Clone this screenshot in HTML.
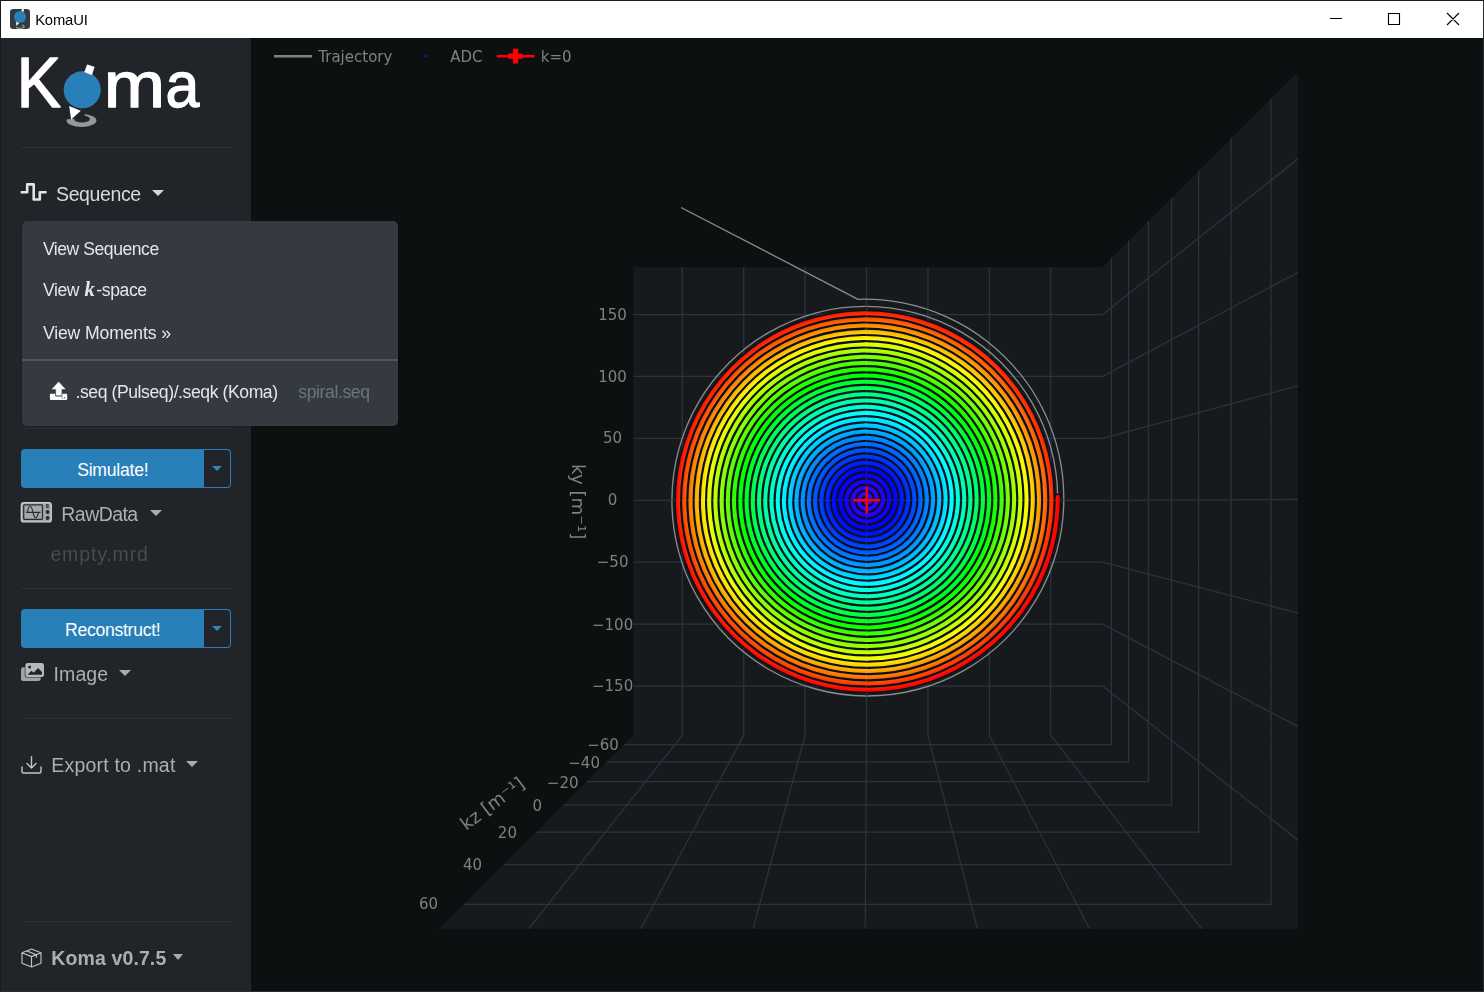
<!DOCTYPE html>
<html lang="en">
<head>
<meta charset="utf-8">
<title>KomaUI</title>
<style>
html,body{margin:0;padding:0;}
body{width:1484px;height:992px;overflow:hidden;background:#0d1011;position:relative;font-family:"Liberation Sans",sans-serif;color:#d0d3d6;}
#win{position:absolute;left:0;top:0;width:1484px;height:992px;overflow:hidden;background:#0d1011;}
#titlebar{position:absolute;left:1px;top:1px;width:1482px;height:37px;background:#fff;}
#sidebar{position:absolute;left:1px;top:38px;width:249.5px;height:953px;background:#212529;}
#plot{position:absolute;left:0;top:0;will-change:transform;}
.t{position:absolute;white-space:nowrap;line-height:1;margin:0;padding:0;}
.hr{position:absolute;left:21px;width:210px;height:1px;background:#2d3135;}
.btn{position:absolute;left:21px;width:210px;height:38.5px;}
.btn .main{position:absolute;left:0;top:0;width:183px;height:100%;background:#2980b9;border-radius:4px 0 0 4px;}
.btn .split{position:absolute;left:183px;top:0;width:27px;height:100%;box-sizing:border-box;border:1.3px solid #2980b9;border-left:none;border-radius:0 4px 4px 0;background:#212529;}
.caret{position:absolute;width:0;height:0;border-left:6px solid transparent;border-right:6px solid transparent;border-top:6px solid #a9acae;}
#menu{position:absolute;left:22px;top:221.2px;width:376px;height:205px;background:#343a40;border-radius:5px;box-shadow:0 0 0 1px rgba(0,0,0,.12);}
#menu .div{position:absolute;left:0;top:137.800px;width:100%;height:1.6px;background:#50565c;}
#frame{position:absolute;left:0;top:0;width:1482px;height:990px;border:1px solid #1b1b1b;border-right-color:#2a2d2f;border-bottom-color:#2a2d2f;pointer-events:none;}
svg{display:block;overflow:visible;}
.ico{position:absolute;}
</style>
</head>
<body>
<div id="win">
<svg id="plot" width="1484" height="992" viewBox="0 0 1484 992">
<defs><clipPath id="sc"><rect x="438.2" y="74" width="859.8" height="854.8"/></clipPath>
<radialGradient id="hs" gradientUnits="userSpaceOnUse" cx="866.3" cy="499.9" r="193.9">
<stop offset="0%" stop-color="#4000ff"/>
<stop offset="1.6%" stop-color="#3e00ff"/>
<stop offset="3.1%" stop-color="#3a00ff"/>
<stop offset="4.7%" stop-color="#3500ff"/>
<stop offset="6.2%" stop-color="#2e00ff"/>
<stop offset="7.8%" stop-color="#2800ff"/>
<stop offset="9.4%" stop-color="#2000ff"/>
<stop offset="10.9%" stop-color="#1800ff"/>
<stop offset="12.5%" stop-color="#0f00ff"/>
<stop offset="14.1%" stop-color="#0500ff"/>
<stop offset="15.6%" stop-color="#0005ff"/>
<stop offset="17.2%" stop-color="#000fff"/>
<stop offset="18.8%" stop-color="#001aff"/>
<stop offset="20.3%" stop-color="#0025ff"/>
<stop offset="21.9%" stop-color="#0031ff"/>
<stop offset="23.4%" stop-color="#003eff"/>
<stop offset="25%" stop-color="#004aff"/>
<stop offset="26.6%" stop-color="#0058ff"/>
<stop offset="28.1%" stop-color="#0065ff"/>
<stop offset="29.7%" stop-color="#0073ff"/>
<stop offset="31.2%" stop-color="#0081ff"/>
<stop offset="32.8%" stop-color="#0090ff"/>
<stop offset="34.4%" stop-color="#009fff"/>
<stop offset="35.9%" stop-color="#00aeff"/>
<stop offset="37.5%" stop-color="#00beff"/>
<stop offset="39.1%" stop-color="#00ceff"/>
<stop offset="40.6%" stop-color="#00deff"/>
<stop offset="42.2%" stop-color="#00efff"/>
<stop offset="43.8%" stop-color="#00fffe"/>
<stop offset="45.3%" stop-color="#00ffed"/>
<stop offset="46.9%" stop-color="#00ffdb"/>
<stop offset="48.4%" stop-color="#00ffc9"/>
<stop offset="50%" stop-color="#00ffb7"/>
<stop offset="51.6%" stop-color="#00ffa5"/>
<stop offset="53.1%" stop-color="#00ff92"/>
<stop offset="54.7%" stop-color="#00ff7f"/>
<stop offset="56.2%" stop-color="#00ff6c"/>
<stop offset="57.8%" stop-color="#00ff58"/>
<stop offset="59.4%" stop-color="#00ff44"/>
<stop offset="60.9%" stop-color="#00ff30"/>
<stop offset="62.5%" stop-color="#00ff1c"/>
<stop offset="64.1%" stop-color="#00ff07"/>
<stop offset="65.6%" stop-color="#0eff00"/>
<stop offset="67.2%" stop-color="#23ff00"/>
<stop offset="68.8%" stop-color="#38ff00"/>
<stop offset="70.3%" stop-color="#4eff00"/>
<stop offset="71.9%" stop-color="#64ff00"/>
<stop offset="73.4%" stop-color="#7aff00"/>
<stop offset="75%" stop-color="#90ff00"/>
<stop offset="76.6%" stop-color="#a7ff00"/>
<stop offset="78.1%" stop-color="#bdff00"/>
<stop offset="79.7%" stop-color="#d4ff00"/>
<stop offset="81.2%" stop-color="#ecff00"/>
<stop offset="82.8%" stop-color="#fffb00"/>
<stop offset="84.4%" stop-color="#ffe300"/>
<stop offset="85.9%" stop-color="#ffcb00"/>
<stop offset="87.5%" stop-color="#ffb300"/>
<stop offset="89.1%" stop-color="#ff9b00"/>
<stop offset="90.6%" stop-color="#ff8200"/>
<stop offset="92.2%" stop-color="#ff6a00"/>
<stop offset="93.8%" stop-color="#ff5100"/>
<stop offset="95.3%" stop-color="#ff3700"/>
<stop offset="96.9%" stop-color="#ff1e00"/>
<stop offset="98.4%" stop-color="#ff0400"/>
<stop offset="100%" stop-color="#ff0000"/>
</radialGradient></defs>
<g clip-path="url(#sc)">
<polygon fill="#161a1d" points="633.3,267.2 1102.6,267.2 1384,-13.7 1384,1016.2 351.5,1016.2 633.3,735.3"/>
<path d="M682.3 267.2V735.3M682.3 735.3L459.3 1016.2M743.7 267.2V735.3M743.7 735.3L594.4 1016.2M805.1 267.2V735.3M805.1 735.3L729.5 1016.2M866.5 267.2V735.3M866.5 735.3L864.6 1016.2M927.9 267.2V735.3M927.9 735.3L999.7 1016.2M989.3 267.2V735.3M989.3 735.3L1134.7 1016.2M1050.7 267.2V735.3M1050.7 735.3L1269.8 1016.2M633.3 314.5H1102.6M1102.6 314.5L1384 90.4M633.3 376.4H1102.6M1102.6 376.4L1384 226.6M633.3 438.4H1102.6M1102.6 438.4L1384 362.9M633.3 500.3H1102.6M1102.6 500.3L1384 499.1M633.3 562.2H1102.6M1102.6 562.2L1384 635.4M633.3 624.1H1102.6M1102.6 624.1L1384 771.6M633.3 686.1H1102.6M1102.6 686.1L1384 907.9M623.9 744.7L1111.4 744.7L1111.4 257.9M606.7 761.9L1128.6 761.9L1128.6 240.7M586.8 781.7L1148.4 781.7L1148.4 220.9M563.7 804.8L1171.5 804.8L1171.5 197.8M536.4 832L1198.7 832L1198.7 170.6M503.8 864.6L1231.2 864.6L1231.2 138.1M464 904.3L1270.9 904.3L1270.9 98.4" fill="none" stroke="#283442" stroke-width="1.25"/>
</g>
<g fill="none">
<path d="M1057.7 496.9Q1057.5 471.9 1050.9 447.9Q1044.3 423.7 1031.7 402.1Q1019.1 380.5 1001.3 362.7Q983.6 345 961.8 332.4Q940.1 319.8 915.8 313.2Q891.5 306.6 866.3 306.4Q840.8 306.3 816.2 312.8Q791.5 319.4 769.4 332.1Q747.3 344.8 729.2 362.8Q711 380.8 698.2 402.8Q685.4 424.9 678.7 449.6Q672 474.3 671.9 499.9Q671.8 525.5 678.3 550.3Q684.7 575.1 697.5 597.4Q710.2 619.7 728.2 638Q746.3 656.2 768.5 669.2Q790.8 682.2 815.6 689Q840.5 695.9 866.3 696Q892.1 696.1 917.1 689.5Q942.1 683 964.6 670.1Q987.1 657.3 1005.5 639.1Q1023.9 620.8 1036.9 598.4Q1050 576 1056.8 551Q1063.7 525.9 1063.8 499.9Q1064 477 1059 454.7Q1054.1 432.4 1044.1 411.7Q1034.1 391 1019.6 373.2Q1005.1 355.3 986.9 341.2Q968.7 327 947.7 317.4Q926.7 307.7 904 303.2Q881.3 298.6 858.1 299.3L681 207.5" stroke="#8c8c8c" stroke-width="1.3" stroke-linejoin="round"/>
<path d="M866.3 499.9Q866.2 499.7 866.1 499.6Q865.9 499.5 865.7 499.5Q865.5 499.5 865.3 499.6Q865.1 499.8 865 500Q864.9 500.2 864.8 500.5Q864.7 500.8 864.8 501.1Q864.9 501.5 865.1 501.8Q865.3 502.1 865.6 502.4Q866 502.6 866.4 502.8Q866.9 502.9 867.4 502.9Q868 502.8 868.5 502.6Q869 502.4 869.5 502Q869.9 501.5 870.3 501Q870.6 500.4 870.7 499.7Q870.8 499 870.7 498.2Q870.6 497.4 870.2 496.7Q869.8 496 869.2 495.4Q868.6 494.8 867.8 494.4Q866.9 494 866 493.9Q865 493.8 864.1 494Q863.1 494.2 862.2 494.8Q861.2 495.3 860.5 496.1Q859.8 497 859.3 498Q858.9 499.1 858.8 500.3Q858.7 501.5 859 502.7Q859.3 503.9 859.9 505Q860.6 506.1 861.7 507Q862.7 507.9 864 508.4Q865.3 508.9 866.7 509Q868.2 509.1 869.6 508.7Q871.1 508.3 872.4 507.5Q873.7 506.6 874.7 505.4Q875.7 504.1 876.3 502.6Q876.9 501.1 876.9 499.4Q877 497.7 876.5 496Q876.1 494.3 875.1 492.8Q874.1 491.3 872.7 490.2Q871.2 489.1 869.4 488.4Q867.6 487.8 865.7 487.7Q863.8 487.6 861.9 488.2Q859.9 488.8 858.3 489.9Q856.6 491.1 855.3 492.7Q854 494.4 853.3 496.4Q852.6 498.4 852.6 500.6Q852.5 502.8 853.1 504.9Q853.8 507 855.1 508.9Q856.4 510.8 858.2 512.2Q860.1 513.6 862.3 514.4Q864.6 515.2 867 515.2Q869.5 515.2 871.8 514.5Q874.2 513.8 876.3 512.3Q878.4 510.9 879.9 508.8Q881.4 506.7 882.3 504.3Q883.1 501.8 883.2 499.1Q883.2 496.4 882.4 493.8Q881.6 491.2 880 489Q878.3 486.7 876.1 485Q873.8 483.3 871.1 482.4Q868.3 481.5 865.4 481.5Q862.5 481.5 859.7 482.4Q856.8 483.3 854.4 485Q851.9 486.8 850.1 489.3Q848.3 491.7 847.3 494.7Q846.3 497.7 846.3 500.8Q846.3 504 847.3 507.1Q848.3 510.1 850.2 512.8Q852.1 515.4 854.8 517.4Q857.5 519.3 860.7 520.4Q863.9 521.4 867.3 521.4Q870.7 521.4 874 520.4Q877.3 519.3 880.1 517.2Q883 515.1 885.1 512.3Q887.2 509.4 888.3 505.9Q889.4 502.5 889.4 498.8Q889.4 495.2 888.2 491.6Q887.1 488.1 884.8 485.1Q882.6 482 879.5 479.8Q876.4 477.6 872.8 476.4Q869.1 475.2 865.2 475.3Q861.2 475.3 857.5 476.5Q853.7 477.8 850.5 480.1Q847.3 482.5 844.9 485.8Q842.5 489.1 841.3 493Q840.1 496.9 840.1 501.1Q840.1 505.3 841.5 509.2Q842.8 513.2 845.3 516.7Q847.8 520.1 851.3 522.6Q854.9 525.1 859 526.4Q863.2 527.7 867.6 527.7Q872 527.6 876.2 526.2Q880.4 524.8 884 522.1Q887.6 519.4 890.3 515.7Q892.9 512 894.3 507.6Q895.7 503.2 895.6 498.6Q895.6 493.9 894.1 489.5Q892.6 485 889.7 481.2Q886.9 477.4 883 474.6Q879.1 471.8 874.5 470.4Q869.8 469 864.9 469Q860 469.1 855.3 470.7Q850.6 472.3 846.7 475.2Q842.6 478.2 839.7 482.3Q836.8 486.5 835.3 491.3Q833.8 496.2 833.9 501.3Q833.9 506.5 835.6 511.4Q837.3 516.3 840.4 520.5Q843.6 524.7 847.9 527.8Q852.2 530.8 857.3 532.4Q862.4 534 867.8 533.9Q873.2 533.8 878.3 532.1Q883.5 530.3 887.9 527Q892.3 523.7 895.5 519.2Q898.6 514.6 900.3 509.3Q901.9 504 901.8 498.3Q901.8 492.7 899.9 487.3Q898.1 481.9 894.6 477.4Q891.2 472.8 886.5 469.5Q881.7 466.1 876.2 464.4Q870.6 462.7 864.7 462.8Q858.8 462.9 853.2 464.8Q847.6 466.7 842.8 470.3Q838 473.9 834.6 478.9Q831.1 483.8 829.3 489.6Q827.5 495.5 827.6 501.6Q827.7 507.7 829.8 513.5Q831.8 519.4 835.5 524.4Q839.3 529.3 844.4 532.9Q849.6 536.5 855.6 538.4Q861.7 540.2 868 540.1Q874.4 540 880.5 537.9Q886.6 535.8 891.7 531.9Q896.9 528 900.6 522.7Q904.4 517.3 906.3 511Q908.2 504.7 908.1 498.1Q908 491.5 905.8 485.2Q903.6 478.9 899.5 473.5Q895.5 468.1 889.9 464.3Q884.4 460.4 877.9 458.4Q871.3 456.4 864.5 456.6Q857.6 456.7 851.1 459Q844.5 461.2 839 465.4Q833.4 469.6 829.4 475.4Q825.4 481.2 823.3 487.9Q821.3 494.7 821.4 501.8Q821.5 508.9 823.9 515.7Q826.2 522.5 830.6 528.2Q835 534 840.9 538.1Q846.9 542.3 853.9 544.4Q860.9 546.5 868.2 546.4Q875.6 546.2 882.6 543.8Q889.6 541.3 895.6 536.8Q901.5 532.3 905.8 526.2Q910.1 520 912.3 512.8Q914.5 505.5 914.3 497.9Q914.2 490.3 911.6 483.1Q909.1 475.8 904.5 469.7Q899.8 463.5 893.4 459.1Q887.1 454.7 879.6 452.4Q872.1 450.2 864.3 450.3Q856.4 450.5 848.9 453.1Q841.5 455.7 835.1 460.5Q828.8 465.3 824.2 471.9Q819.7 478.5 817.3 486.2Q815 493.9 815.2 502Q815.3 510.1 818 517.8Q820.7 525.5 825.7 532Q830.6 538.6 837.4 543.3Q844.2 548 852.1 550.4Q860.1 552.8 868.4 552.6Q876.8 552.4 884.7 549.6Q892.7 546.9 899.4 541.8Q906.1 536.6 911 529.7Q915.8 522.7 918.3 514.5Q920.7 506.3 920.5 497.7Q920.4 489.1 917.5 481Q914.6 472.8 909.4 465.9Q904.1 458.9 896.9 454Q889.7 449 881.3 446.4Q872.9 443.9 864.1 444.1Q855.2 444.3 846.8 447.2Q838.4 450.2 831.3 455.6Q824.2 461 819.1 468.4Q813.9 475.8 811.3 484.4Q808.7 493.1 808.9 502.2Q809.1 511.3 812.2 519.9Q815.2 528.5 820.7 535.8Q826.3 543.2 833.9 548.4Q841.5 553.7 850.4 556.3Q859.3 559 868.6 558.8Q878 558.6 886.8 555.5Q895.7 552.4 903.2 546.7Q910.7 541 916.1 533.2Q921.5 525.4 924.2 516.2Q927 507.1 926.8 497.5Q926.6 487.9 923.4 478.9Q920.2 469.7 914.3 462.1Q908.4 454.3 900.5 448.8Q892.4 443.3 883.1 440.5Q873.7 437.6 863.9 437.9Q854 438.1 844.7 441.4Q835.4 444.6 827.5 450.6Q819.6 456.7 813.9 464.9Q808.2 473.1 805.4 482.7Q802.5 492.3 802.7 502.4Q802.9 512.4 806.3 522Q809.6 531.6 815.8 539.6Q822 547.7 830.4 553.6Q838.8 559.4 848.6 562.3Q858.5 565.3 868.8 565Q879.1 564.8 888.9 561.4Q898.7 557.9 907 551.6Q915.3 545.3 921.2 536.7Q927.2 528.1 930.2 518Q933.2 507.9 933 497.4Q932.8 486.8 929.2 476.8Q925.7 466.7 919.3 458.3Q912.8 449.8 904 443.7Q895.2 437.6 884.9 434.5Q874.5 431.4 863.7 431.6Q852.9 431.9 842.7 435.5Q832.4 439.1 823.7 445.7Q815 452.3 808.8 461.3Q802.5 470.4 799.4 480.9Q796.2 491.5 796.5 502.5Q796.7 513.6 800.4 524.1Q804.1 534.6 810.9 543.4Q817.6 552.3 826.8 558.7Q836.1 565.1 846.9 568.3Q857.7 571.5 869 571.3Q880.3 571 891 567.3Q901.7 563.5 910.8 556.6Q919.9 549.7 926.4 540.2Q932.9 530.8 936.2 519.8Q939.5 508.7 939.2 497.2Q939 485.6 935.1 474.7Q931.3 463.7 924.2 454.5Q917.1 445.2 907.5 438.5Q897.9 431.9 886.6 428.5Q875.4 425.1 863.6 425.4Q851.8 425.7 840.6 429.6Q829.4 433.5 819.9 440.7Q810.4 448 803.7 457.8Q796.9 467.6 793.4 479.1Q790 490.6 790.2 502.7Q790.5 514.7 794.5 526.1Q798.5 537.6 805.9 547.2Q813.3 556.9 823.3 563.8Q833.3 570.8 845.1 574.3Q856.8 577.8 869.1 577.5Q881.4 577.2 893 573.1Q904.7 569 914.6 561.5Q924.4 554 931.5 543.8Q938.6 533.5 942.2 521.6Q945.8 509.6 945.5 497.1Q945.2 484.5 941 472.6Q936.8 460.7 929.2 450.7Q921.5 440.6 911.1 433.4Q900.6 426.2 888.4 422.5Q876.2 418.9 863.4 419.2Q850.6 419.5 838.5 423.7Q826.4 428 816.2 435.8Q805.9 443.6 798.5 454.2Q791.2 464.9 787.4 477.3Q783.7 489.8 784 502.8Q784.3 515.9 788.6 528.2Q793 540.6 800.9 551Q808.9 561.4 819.7 568.9Q830.6 576.5 843.3 580.2Q856 584.1 869.2 583.7Q882.5 583.4 895.1 579Q907.7 574.6 918.3 566.5Q929 558.4 936.6 547.3Q944.3 536.3 948.1 523.4Q952 510.5 951.7 496.9Q951.4 483.4 946.9 470.6Q942.4 457.8 934.1 446.9Q925.9 436.1 914.6 428.3Q903.4 420.5 890.2 416.6Q877.1 412.6 863.3 412.9Q849.5 413.3 836.5 417.8Q823.4 422.4 812.4 430.8Q801.3 439.2 793.4 450.7Q785.5 462.1 781.5 475.5Q777.5 488.9 777.8 502.9Q778.1 517 782.8 530.2Q787.4 543.5 796 554.7Q804.5 566 816.2 574.1Q827.8 582.1 841.5 586.2Q855.1 590.3 869.3 590Q883.6 589.7 897.1 584.9Q910.7 580.2 922.1 571.5Q933.5 562.8 941.7 550.9Q950 539 954.1 525.2Q958.3 511.3 957.9 496.8Q957.6 482.3 952.8 468.6Q948 454.8 939.1 443.2Q930.3 431.5 918.2 423.2Q906.1 414.8 892.1 410.6Q877.9 406.4 863.2 406.7Q848.4 407 834.5 411.9Q820.5 416.8 808.6 425.8Q796.8 434.8 788.3 447.1Q779.8 459.4 775.5 473.7Q771.2 488 771.5 503Q771.9 518.1 776.9 532.3Q781.8 546.5 791 558.5Q800.1 570.5 812.6 579.2Q825.1 587.8 839.6 592.2Q854.2 596.6 869.5 596.2Q884.7 595.9 899.2 590.8Q913.6 585.8 925.8 576.5Q938.1 567.2 946.8 554.5Q955.6 541.8 960.1 527Q964.5 512.2 964.2 496.7Q963.8 481.2 958.7 466.5Q953.6 451.8 944.1 439.4Q934.7 427 921.8 418.1Q908.9 409.2 893.9 404.6Q878.8 400.1 863.1 400.5Q847.3 400.8 832.4 406Q817.5 411.3 804.9 420.8Q792.3 430.4 783.2 443.5Q774.1 456.6 769.6 471.8Q765 487.1 765.3 503.1Q765.7 519.1 771 534.3Q776.3 549.4 786 562.2Q795.7 575.1 809 584.3Q822.3 593.5 837.8 598.1Q853.3 602.8 869.5 602.4Q885.8 602.1 901.2 596.7Q916.6 591.3 929.6 581.5Q942.6 571.6 951.9 558.1Q961.3 544.6 966 528.9Q970.8 513.1 970.4 496.6Q970 480.1 964.6 464.5Q959.1 448.9 949.1 435.7Q939.1 422.5 925.4 413Q911.7 403.5 895.7 398.7Q879.7 393.9 863 394.2Q846.3 394.6 830.4 400.1Q814.6 405.7 801.2 415.8Q787.7 426 778.1 439.9Q768.5 453.8 763.6 470Q758.7 486.2 759.1 503.2Q759.4 520.2 765 536.3Q770.7 552.4 781 566Q791.3 579.6 805.4 589.3Q819.5 599.1 835.9 604.1Q852.4 609 869.6 608.7Q886.9 608.3 903.2 602.6Q919.5 596.9 933.3 586.5Q947.1 576 957 561.7Q966.9 547.4 972 530.7Q977 514 976.6 496.6Q976.3 479.1 970.5 462.5Q964.7 446 954.1 432Q943.5 418 929 407.9Q914.5 397.8 897.6 392.7Q880.7 387.6 863 388Q845.2 388.4 828.4 394.2Q811.6 400.1 797.4 410.8Q783.2 421.6 773 436.3Q762.8 451 757.7 468.1Q752.5 485.3 752.8 503.3Q753.2 521.2 759.1 538.3Q765.1 555.3 776 569.7Q786.9 584.1 801.8 594.4Q816.7 604.8 834.1 610Q851.5 615.3 869.7 614.9Q887.9 614.5 905.2 608.5Q922.4 602.5 937 591.5Q951.6 580.4 962.1 565.3Q972.6 550.2 977.9 532.6Q983.3 515 982.9 496.5Q982.5 478 976.4 460.6Q970.3 443 959.1 428.3Q947.9 413.5 932.6 402.8Q917.3 392.2 899.5 386.8Q881.6 381.4 862.9 381.8Q844.2 382.1 826.5 388.3Q808.7 394.5 793.7 405.8Q778.7 417.2 768 432.7Q757.2 448.2 751.7 466.3Q746.2 484.4 746.6 503.3Q747 522.3 753.2 540.2Q759.5 558.2 771 573.4Q782.5 588.6 798.2 599.5Q813.9 610.4 832.2 616Q850.5 621.5 869.7 621.2Q888.9 620.8 907.1 614.5Q925.3 608.1 940.7 596.5Q956.1 584.8 967.2 568.9Q978.2 553 983.9 534.5Q989.5 515.9 989.1 496.5Q988.7 477 982.3 458.6Q975.9 440.1 964.1 424.6Q952.3 409 936.3 397.8Q920.2 386.6 901.4 380.9Q882.5 375.1 862.9 375.5Q843.1 375.9 824.5 382.4Q805.8 388.9 790 400.8Q774.2 412.8 762.9 429Q751.5 445.3 745.8 464.4Q740 483.4 740.4 503.3Q740.8 523.3 747.3 542.2Q753.9 561.1 765.9 577.1Q778.1 593.1 794.5 604.6Q811 616.1 830.3 621.9Q849.6 627.8 869.8 627.4Q890 627 909.1 620.4Q928.2 613.7 944.4 601.5Q960.6 589.3 972.2 572.6Q983.9 555.9 989.8 536.4Q995.7 516.9 995.3 496.4Q995 476 988.3 456.6Q981.5 437.3 969.2 420.9Q956.8 404.5 939.9 392.7Q923 380.9 903.3 374.9Q883.5 368.9 862.8 369.3Q842.1 369.7 822.5 376.5Q802.9 383.2 786.4 395.8Q769.8 408.3 757.8 425.4Q745.9 442.5 739.8 462.5Q733.7 482.5 734.1 503.4Q734.5 524.3 741.4 544.1Q748.2 564 760.9 580.8Q773.6 597.6 790.9 609.6Q808.2 621.7 828.4 627.9Q848.6 634 869.8 633.6Q891 633.2 911 626.3Q931.1 619.4 948.1 606.5Q965.1 593.7 977.3 576.2Q989.5 558.7 995.7 538.3Q1002 517.8 1001.6 496.4Q1001.2 475 994.2 454.7Q987.2 434.4 974.2 417.2Q961.2 400 943.6 387.7Q925.9 375.3 905.2 369Q884.5 362.7 862.8 363.1Q841.1 363.5 820.6 370.5Q800.1 377.6 782.7 390.7Q765.3 403.9 752.8 421.7Q740.3 439.6 733.9 460.5Q727.5 481.5 727.9 503.4Q728.3 525.3 735.5 546.1Q742.6 566.9 755.9 584.4Q769.1 602 787.2 614.7Q805.3 627.3 826.5 633.8Q847.6 640.3 869.8 639.9Q892 639.5 913 632.2Q934 625 951.7 611.6Q969.5 598.2 982.3 579.9Q995.1 561.6 1001.7 540.2Q1008.2 518.8 1007.8 496.4Q1007.4 474 1000.1 452.8Q992.8 431.5 979.2 413.5Q965.7 395.5 947.2 382.6Q928.7 369.7 907.1 363Q885.5 356.4 862.8 356.8Q840.1 357.2 818.7 364.6Q797.2 372 779 385.7Q760.8 399.4 747.8 418.1Q734.7 436.8 728 458.6Q721.3 480.5 721.7 503.4Q722.1 526.3 729.5 548Q737 569.7 750.8 588.1Q764.7 606.5 783.5 619.7Q802.4 633 824.5 639.7Q846.6 646.5 869.8 646.1Q892.9 645.7 914.9 638.2Q936.8 630.6 955.4 616.6Q974 602.6 987.4 583.6Q1000.8 564.5 1007.6 542.2Q1014.4 519.8 1014.1 496.4Q1013.7 473 1006 450.8Q998.4 428.7 984.3 409.9Q970.2 391.1 950.9 377.6Q931.6 364 909.1 357.1Q886.5 350.2 862.8 350.6Q839.2 351 816.8 358.7Q794.3 366.4 775.4 380.6Q756.4 394.9 742.7 414.4Q729 433.9 722 456.7Q715 479.5 715.4 503.4Q715.8 527.3 723.6 549.9Q731.4 572.6 745.8 591.7Q760.2 610.9 779.9 624.7Q799.6 638.6 822.6 645.6Q845.6 652.7 869.7 652.3Q893.9 651.9 916.8 644.1Q939.7 636.2 959 621.7Q978.4 607.1 992.4 587.3Q1006.4 567.4 1013.5 544.1Q1020.7 520.8 1020.3 496.5Q1019.9 472.1 1012 448.9Q1004.1 425.8 989.4 406.2Q974.6 386.6 954.6 372.5Q934.5 358.4 911 351.2Q887.5 344 862.9 344.4Q838.2 344.7 814.9 352.7Q791.5 360.7 771.7 375.6Q751.9 390.4 737.7 410.7Q723.4 431 716.1 454.7Q708.8 478.5 709.2 503.3Q709.6 528.2 717.6 551.8Q725.7 575.4 740.7 595.4Q755.7 615.4 776.2 629.8Q796.7 644.2 820.6 651.6Q844.6 658.9 869.7 658.6Q894.9 658.2 918.7 650Q942.5 641.9 962.7 626.8Q982.9 611.6 997.4 591Q1012 570.3 1019.4 546.1Q1026.9 521.9 1026.5 496.5Q1026.1 471.1 1017.9 447.1Q1009.7 423 994.4 402.6Q979.1 382.2 958.3 367.5Q937.4 352.8 913 345.3Q888.5 337.7 862.9 338.1Q837.3 338.5 813 346.8Q788.7 355.1 768.1 370.5Q747.5 385.9 732.7 407Q717.8 428.1 710.2 452.7Q702.6 477.4 703 503.3Q703.3 529.2 711.7 553.7Q720.1 578.2 735.6 599Q751.2 619.8 772.5 634.8Q793.7 649.8 818.6 657.5Q843.6 665.2 869.7 664.8Q895.8 664.4 920.5 656Q945.3 647.5 966.3 631.8Q987.3 616.1 1002.4 594.7Q1017.6 573.2 1025.4 548.1Q1033.1 522.9 1032.8 496.6Q1032.4 470.2 1023.9 445.2Q1015.4 420.2 999.5 399Q983.6 377.8 962 362.5Q940.3 347.2 915 339.4Q889.6 331.5 863 331.9Q836.3 332.3 811.1 340.8Q785.9 349.4 764.5 365.4Q743.1 381.4 727.7 403.3Q712.2 425.2 704.3 450.7Q696.4 476.4 696.7 503.2Q697.1 530.1 705.7 555.5Q714.4 581 730.5 602.6Q746.7 624.2 768.7 639.8Q790.8 655.4 816.7 663.4Q842.5 671.4 869.6 671Q896.7 670.7 922.4 661.9Q948.1 653.2 969.9 636.9Q991.7 620.6 1007.4 598.4Q1023.2 576.1 1031.3 550Q1039.4 524 1039 496.6Q1038.6 469.3 1029.8 443.3Q1021 417.4 1004.6 395.4Q988.2 373.4 965.7 357.5Q943.2 341.6 916.9 333.5Q890.6 325.3 863 325.6Q835.4 326 809.3 334.9Q783.1 343.8 760.9 360.3Q738.7 376.9 722.7 399.6Q706.6 422.2 698.4 448.8Q690.1 475.3 690.5 503.1Q690.8 531 699.8 557.4Q708.8 583.8 725.5 606.2Q742.2 628.6 765 644.8Q787.9 661 814.6 669.3Q841.4 677.6 869.5 677.3Q897.6 676.9 924.3 667.9Q950.9 658.9 973.5 642Q996.1 625.2 1012.4 602.1Q1028.8 579 1037.2 552.1Q1045.6 525 1045.2 496.7Q1044.9 468.3 1035.8 441.5Q1026.7 414.6 1009.7 391.8Q992.7 369 969.4 352.5Q946.2 336 919 327.6Q891.7 319.1 863.1 319.4Q834.5 319.8 807.4 328.9Q780.3 338.1 757.3 355.2Q734.3 372.4 717.7 395.8Q701 419.3 692.5 446.7Q683.9 474.2 684.2 503Q684.6 531.9 693.8 559.2Q703.1 586.6 720.4 609.8Q737.6 633 761.3 649.8Q784.9 666.6 812.6 675.2Q840.4 683.8 869.4 683.5Q898.5 683.2 926.1 673.9Q953.7 664.5 977.1 647.1Q1000.5 629.7 1017.4 605.9Q1034.3 582 1043.1 554.1Q1051.8 526.1 1051.5 496.8Q1051.1 467.5 1041.7 439.6Q1032.3 411.8 1014.8 388.2Q997.2 364.6 973.2 347.5Q949.1 330.5 921 321.7Q892.8 312.8 863.2 313.2Q833.6 313.5 805.6 323Q777.5 332.4 753.7 350.1Q729.9 367.8 712.7 392.1Q695.5 416.3 686.6 444.7Q677.7 473.1 678 502.9Q678.3 532.8 687.9 561.1Q697.4 589.4 715.3 613.4Q733.1 637.4 757.5 654.8Q782 672.1 810.6 681.1Q839.3 690.1 869.3 689.7Q899.4 689.4 927.9 679.8Q956.5 670.2 980.7 652.2Q1004.9 634.2 1022.4 609.6Q1039.9 585 1049 556.1Q1058 527.2 1057.7 496.9" stroke="#07101c" stroke-width="6.6" stroke-linecap="round"/>
<circle cx="866.3" cy="499.9" r="3" fill="#07101c"/>
<path d="M866.5 300V700M665 500.4H1068" stroke="#283442" stroke-width="1.2" opacity=".8"/>
<path d="M866.3 499.9Q866.2 499.7 866.1 499.6Q865.9 499.5 865.7 499.5Q865.5 499.5 865.3 499.6Q865.1 499.8 865 500Q864.9 500.2 864.8 500.5Q864.7 500.8 864.8 501.1Q864.9 501.5 865.1 501.8Q865.3 502.1 865.6 502.4Q866 502.6 866.4 502.8Q866.9 502.9 867.4 502.9Q868 502.8 868.5 502.6Q869 502.4 869.5 502Q869.9 501.5 870.3 501Q870.6 500.4 870.7 499.7Q870.8 499 870.7 498.2Q870.6 497.4 870.2 496.7Q869.8 496 869.2 495.4Q868.6 494.8 867.8 494.4Q866.9 494 866 493.9Q865 493.8 864.1 494Q863.1 494.2 862.2 494.8Q861.2 495.3 860.5 496.1Q859.8 497 859.3 498Q858.9 499.1 858.8 500.3Q858.7 501.5 859 502.7Q859.3 503.9 859.9 505Q860.6 506.1 861.7 507Q862.7 507.9 864 508.4Q865.3 508.9 866.7 509Q868.2 509.1 869.6 508.7Q871.1 508.3 872.4 507.5Q873.7 506.6 874.7 505.4Q875.7 504.1 876.3 502.6Q876.9 501.1 876.9 499.4Q877 497.7 876.5 496Q876.1 494.3 875.1 492.8Q874.1 491.3 872.7 490.2Q871.2 489.1 869.4 488.4Q867.6 487.8 865.7 487.7Q863.8 487.6 861.9 488.2Q859.9 488.8 858.3 489.9Q856.6 491.1 855.3 492.7Q854 494.4 853.3 496.4Q852.6 498.4 852.6 500.6Q852.5 502.8 853.1 504.9Q853.8 507 855.1 508.9Q856.4 510.8 858.2 512.2Q860.1 513.6 862.3 514.4Q864.6 515.2 867 515.2Q869.5 515.2 871.8 514.5Q874.2 513.8 876.3 512.3Q878.4 510.9 879.9 508.8Q881.4 506.7 882.3 504.3Q883.1 501.8 883.2 499.1Q883.2 496.4 882.4 493.8Q881.6 491.2 880 489Q878.3 486.7 876.1 485Q873.8 483.3 871.1 482.4Q868.3 481.5 865.4 481.5Q862.5 481.5 859.7 482.4Q856.8 483.3 854.4 485Q851.9 486.8 850.1 489.3Q848.3 491.7 847.3 494.7Q846.3 497.7 846.3 500.8Q846.3 504 847.3 507.1Q848.3 510.1 850.2 512.8Q852.1 515.4 854.8 517.4Q857.5 519.3 860.7 520.4Q863.9 521.4 867.3 521.4Q870.7 521.4 874 520.4Q877.3 519.3 880.1 517.2Q883 515.1 885.1 512.3Q887.2 509.4 888.3 505.9Q889.4 502.5 889.4 498.8Q889.4 495.2 888.2 491.6Q887.1 488.1 884.8 485.1Q882.6 482 879.5 479.8Q876.4 477.6 872.8 476.4Q869.1 475.2 865.2 475.3Q861.2 475.3 857.5 476.5Q853.7 477.8 850.5 480.1Q847.3 482.5 844.9 485.8Q842.5 489.1 841.3 493Q840.1 496.9 840.1 501.1Q840.1 505.3 841.5 509.2Q842.8 513.2 845.3 516.7Q847.8 520.1 851.3 522.6Q854.9 525.1 859 526.4Q863.2 527.7 867.6 527.7Q872 527.6 876.2 526.2Q880.4 524.8 884 522.1Q887.6 519.4 890.3 515.7Q892.9 512 894.3 507.6Q895.7 503.2 895.6 498.6Q895.6 493.9 894.1 489.5Q892.6 485 889.7 481.2Q886.9 477.4 883 474.6Q879.1 471.8 874.5 470.4Q869.8 469 864.9 469Q860 469.1 855.3 470.7Q850.6 472.3 846.7 475.2Q842.6 478.2 839.7 482.3Q836.8 486.5 835.3 491.3Q833.8 496.2 833.9 501.3Q833.9 506.5 835.6 511.4Q837.3 516.3 840.4 520.5Q843.6 524.7 847.9 527.8Q852.2 530.8 857.3 532.4Q862.4 534 867.8 533.9Q873.2 533.8 878.3 532.1Q883.5 530.3 887.9 527Q892.3 523.7 895.5 519.2Q898.6 514.6 900.3 509.3Q901.9 504 901.8 498.3Q901.8 492.7 899.9 487.3Q898.1 481.9 894.6 477.4Q891.2 472.8 886.5 469.5Q881.7 466.1 876.2 464.4Q870.6 462.7 864.7 462.8Q858.8 462.9 853.2 464.8Q847.6 466.7 842.8 470.3Q838 473.9 834.6 478.9Q831.1 483.8 829.3 489.6Q827.5 495.5 827.6 501.6Q827.7 507.7 829.8 513.5Q831.8 519.4 835.5 524.4Q839.3 529.3 844.4 532.9Q849.6 536.5 855.6 538.4Q861.7 540.2 868 540.1Q874.4 540 880.5 537.9Q886.6 535.8 891.7 531.9Q896.9 528 900.6 522.7Q904.4 517.3 906.3 511Q908.2 504.7 908.1 498.1Q908 491.5 905.8 485.2Q903.6 478.9 899.5 473.5Q895.5 468.1 889.9 464.3Q884.4 460.4 877.9 458.4Q871.3 456.4 864.5 456.6Q857.6 456.7 851.1 459Q844.5 461.2 839 465.4Q833.4 469.6 829.4 475.4Q825.4 481.2 823.3 487.9Q821.3 494.7 821.4 501.8Q821.5 508.9 823.9 515.7Q826.2 522.5 830.6 528.2Q835 534 840.9 538.1Q846.9 542.3 853.9 544.4Q860.9 546.5 868.2 546.4Q875.6 546.2 882.6 543.8Q889.6 541.3 895.6 536.8Q901.5 532.3 905.8 526.2Q910.1 520 912.3 512.8Q914.5 505.5 914.3 497.9Q914.2 490.3 911.6 483.1Q909.1 475.8 904.5 469.7Q899.8 463.5 893.4 459.1Q887.1 454.7 879.6 452.4Q872.1 450.2 864.3 450.3Q856.4 450.5 848.9 453.1Q841.5 455.7 835.1 460.5Q828.8 465.3 824.2 471.9Q819.7 478.5 817.3 486.2Q815 493.9 815.2 502Q815.3 510.1 818 517.8Q820.7 525.5 825.7 532Q830.6 538.6 837.4 543.3Q844.2 548 852.1 550.4Q860.1 552.8 868.4 552.6Q876.8 552.4 884.7 549.6Q892.7 546.9 899.4 541.8Q906.1 536.6 911 529.7Q915.8 522.7 918.3 514.5Q920.7 506.3 920.5 497.7Q920.4 489.1 917.5 481Q914.6 472.8 909.4 465.9Q904.1 458.9 896.9 454Q889.7 449 881.3 446.4Q872.9 443.9 864.1 444.1Q855.2 444.3 846.8 447.2Q838.4 450.2 831.3 455.6Q824.2 461 819.1 468.4Q813.9 475.8 811.3 484.4Q808.7 493.1 808.9 502.2Q809.1 511.3 812.2 519.9Q815.2 528.5 820.7 535.8Q826.3 543.2 833.9 548.4Q841.5 553.7 850.4 556.3Q859.3 559 868.6 558.8Q878 558.6 886.8 555.5Q895.7 552.4 903.2 546.7Q910.7 541 916.1 533.2Q921.5 525.4 924.2 516.2Q927 507.1 926.8 497.5Q926.6 487.9 923.4 478.9Q920.2 469.7 914.3 462.1Q908.4 454.3 900.5 448.8Q892.4 443.3 883.1 440.5Q873.7 437.6 863.9 437.9Q854 438.1 844.7 441.4Q835.4 444.6 827.5 450.6Q819.6 456.7 813.9 464.9Q808.2 473.1 805.4 482.7Q802.5 492.3 802.7 502.4Q802.9 512.4 806.3 522Q809.6 531.6 815.8 539.6Q822 547.7 830.4 553.6Q838.8 559.4 848.6 562.3Q858.5 565.3 868.8 565Q879.1 564.8 888.9 561.4Q898.7 557.9 907 551.6Q915.3 545.3 921.2 536.7Q927.2 528.1 930.2 518Q933.2 507.9 933 497.4Q932.8 486.8 929.2 476.8Q925.7 466.7 919.3 458.3Q912.8 449.8 904 443.7Q895.2 437.6 884.9 434.5Q874.5 431.4 863.7 431.6Q852.9 431.9 842.7 435.5Q832.4 439.1 823.7 445.7Q815 452.3 808.8 461.3Q802.5 470.4 799.4 480.9Q796.2 491.5 796.5 502.5Q796.7 513.6 800.4 524.1Q804.1 534.6 810.9 543.4Q817.6 552.3 826.8 558.7Q836.1 565.1 846.9 568.3Q857.7 571.5 869 571.3Q880.3 571 891 567.3Q901.7 563.5 910.8 556.6Q919.9 549.7 926.4 540.2Q932.9 530.8 936.2 519.8Q939.5 508.7 939.2 497.2Q939 485.6 935.1 474.7Q931.3 463.7 924.2 454.5Q917.1 445.2 907.5 438.5Q897.9 431.9 886.6 428.5Q875.4 425.1 863.6 425.4Q851.8 425.7 840.6 429.6Q829.4 433.5 819.9 440.7Q810.4 448 803.7 457.8Q796.9 467.6 793.4 479.1Q790 490.6 790.2 502.7Q790.5 514.7 794.5 526.1Q798.5 537.6 805.9 547.2Q813.3 556.9 823.3 563.8Q833.3 570.8 845.1 574.3Q856.8 577.8 869.1 577.5Q881.4 577.2 893 573.1Q904.7 569 914.6 561.5Q924.4 554 931.5 543.8Q938.6 533.5 942.2 521.6Q945.8 509.6 945.5 497.1Q945.2 484.5 941 472.6Q936.8 460.7 929.2 450.7Q921.5 440.6 911.1 433.4Q900.6 426.2 888.4 422.5Q876.2 418.9 863.4 419.2Q850.6 419.5 838.5 423.7Q826.4 428 816.2 435.8Q805.9 443.6 798.5 454.2Q791.2 464.9 787.4 477.3Q783.7 489.8 784 502.8Q784.3 515.9 788.6 528.2Q793 540.6 800.9 551Q808.9 561.4 819.7 568.9Q830.6 576.5 843.3 580.2Q856 584.1 869.2 583.7Q882.5 583.4 895.1 579Q907.7 574.6 918.3 566.5Q929 558.4 936.6 547.3Q944.3 536.3 948.1 523.4Q952 510.5 951.7 496.9Q951.4 483.4 946.9 470.6Q942.4 457.8 934.1 446.9Q925.9 436.1 914.6 428.3Q903.4 420.5 890.2 416.6Q877.1 412.6 863.3 412.9Q849.5 413.3 836.5 417.8Q823.4 422.4 812.4 430.8Q801.3 439.2 793.4 450.7Q785.5 462.1 781.5 475.5Q777.5 488.9 777.8 502.9Q778.1 517 782.8 530.2Q787.4 543.5 796 554.7Q804.5 566 816.2 574.1Q827.8 582.1 841.5 586.2Q855.1 590.3 869.3 590Q883.6 589.7 897.1 584.9Q910.7 580.2 922.1 571.5Q933.5 562.8 941.7 550.9Q950 539 954.1 525.2Q958.3 511.3 957.9 496.8Q957.6 482.3 952.8 468.6Q948 454.8 939.1 443.2Q930.3 431.5 918.2 423.2Q906.1 414.8 892.1 410.6Q877.9 406.4 863.2 406.7Q848.4 407 834.5 411.9Q820.5 416.8 808.6 425.8Q796.8 434.8 788.3 447.1Q779.8 459.4 775.5 473.7Q771.2 488 771.5 503Q771.9 518.1 776.9 532.3Q781.8 546.5 791 558.5Q800.1 570.5 812.6 579.2Q825.1 587.8 839.6 592.2Q854.2 596.6 869.5 596.2Q884.7 595.9 899.2 590.8Q913.6 585.8 925.8 576.5Q938.1 567.2 946.8 554.5Q955.6 541.8 960.1 527Q964.5 512.2 964.2 496.7Q963.8 481.2 958.7 466.5Q953.6 451.8 944.1 439.4Q934.7 427 921.8 418.1Q908.9 409.2 893.9 404.6Q878.8 400.1 863.1 400.5Q847.3 400.8 832.4 406Q817.5 411.3 804.9 420.8Q792.3 430.4 783.2 443.5Q774.1 456.6 769.6 471.8Q765 487.1 765.3 503.1Q765.7 519.1 771 534.3Q776.3 549.4 786 562.2Q795.7 575.1 809 584.3Q822.3 593.5 837.8 598.1Q853.3 602.8 869.5 602.4Q885.8 602.1 901.2 596.7Q916.6 591.3 929.6 581.5Q942.6 571.6 951.9 558.1Q961.3 544.6 966 528.9Q970.8 513.1 970.4 496.6Q970 480.1 964.6 464.5Q959.1 448.9 949.1 435.7Q939.1 422.5 925.4 413Q911.7 403.5 895.7 398.7Q879.7 393.9 863 394.2Q846.3 394.6 830.4 400.1Q814.6 405.7 801.2 415.8Q787.7 426 778.1 439.9Q768.5 453.8 763.6 470Q758.7 486.2 759.1 503.2Q759.4 520.2 765 536.3Q770.7 552.4 781 566Q791.3 579.6 805.4 589.3Q819.5 599.1 835.9 604.1Q852.4 609 869.6 608.7Q886.9 608.3 903.2 602.6Q919.5 596.9 933.3 586.5Q947.1 576 957 561.7Q966.9 547.4 972 530.7Q977 514 976.6 496.6Q976.3 479.1 970.5 462.5Q964.7 446 954.1 432Q943.5 418 929 407.9Q914.5 397.8 897.6 392.7Q880.7 387.6 863 388Q845.2 388.4 828.4 394.2Q811.6 400.1 797.4 410.8Q783.2 421.6 773 436.3Q762.8 451 757.7 468.1Q752.5 485.3 752.8 503.3Q753.2 521.2 759.1 538.3Q765.1 555.3 776 569.7Q786.9 584.1 801.8 594.4Q816.7 604.8 834.1 610Q851.5 615.3 869.7 614.9Q887.9 614.5 905.2 608.5Q922.4 602.5 937 591.5Q951.6 580.4 962.1 565.3Q972.6 550.2 977.9 532.6Q983.3 515 982.9 496.5Q982.5 478 976.4 460.6Q970.3 443 959.1 428.3Q947.9 413.5 932.6 402.8Q917.3 392.2 899.5 386.8Q881.6 381.4 862.9 381.8Q844.2 382.1 826.5 388.3Q808.7 394.5 793.7 405.8Q778.7 417.2 768 432.7Q757.2 448.2 751.7 466.3Q746.2 484.4 746.6 503.3Q747 522.3 753.2 540.2Q759.5 558.2 771 573.4Q782.5 588.6 798.2 599.5Q813.9 610.4 832.2 616Q850.5 621.5 869.7 621.2Q888.9 620.8 907.1 614.5Q925.3 608.1 940.7 596.5Q956.1 584.8 967.2 568.9Q978.2 553 983.9 534.5Q989.5 515.9 989.1 496.5Q988.7 477 982.3 458.6Q975.9 440.1 964.1 424.6Q952.3 409 936.3 397.8Q920.2 386.6 901.4 380.9Q882.5 375.1 862.9 375.5Q843.1 375.9 824.5 382.4Q805.8 388.9 790 400.8Q774.2 412.8 762.9 429Q751.5 445.3 745.8 464.4Q740 483.4 740.4 503.3Q740.8 523.3 747.3 542.2Q753.9 561.1 765.9 577.1Q778.1 593.1 794.5 604.6Q811 616.1 830.3 621.9Q849.6 627.8 869.8 627.4Q890 627 909.1 620.4Q928.2 613.7 944.4 601.5Q960.6 589.3 972.2 572.6Q983.9 555.9 989.8 536.4Q995.7 516.9 995.3 496.4Q995 476 988.3 456.6Q981.5 437.3 969.2 420.9Q956.8 404.5 939.9 392.7Q923 380.9 903.3 374.9Q883.5 368.9 862.8 369.3Q842.1 369.7 822.5 376.5Q802.9 383.2 786.4 395.8Q769.8 408.3 757.8 425.4Q745.9 442.5 739.8 462.5Q733.7 482.5 734.1 503.4Q734.5 524.3 741.4 544.1Q748.2 564 760.9 580.8Q773.6 597.6 790.9 609.6Q808.2 621.7 828.4 627.9Q848.6 634 869.8 633.6Q891 633.2 911 626.3Q931.1 619.4 948.1 606.5Q965.1 593.7 977.3 576.2Q989.5 558.7 995.7 538.3Q1002 517.8 1001.6 496.4Q1001.2 475 994.2 454.7Q987.2 434.4 974.2 417.2Q961.2 400 943.6 387.7Q925.9 375.3 905.2 369Q884.5 362.7 862.8 363.1Q841.1 363.5 820.6 370.5Q800.1 377.6 782.7 390.7Q765.3 403.9 752.8 421.7Q740.3 439.6 733.9 460.5Q727.5 481.5 727.9 503.4Q728.3 525.3 735.5 546.1Q742.6 566.9 755.9 584.4Q769.1 602 787.2 614.7Q805.3 627.3 826.5 633.8Q847.6 640.3 869.8 639.9Q892 639.5 913 632.2Q934 625 951.7 611.6Q969.5 598.2 982.3 579.9Q995.1 561.6 1001.7 540.2Q1008.2 518.8 1007.8 496.4Q1007.4 474 1000.1 452.8Q992.8 431.5 979.2 413.5Q965.7 395.5 947.2 382.6Q928.7 369.7 907.1 363Q885.5 356.4 862.8 356.8Q840.1 357.2 818.7 364.6Q797.2 372 779 385.7Q760.8 399.4 747.8 418.1Q734.7 436.8 728 458.6Q721.3 480.5 721.7 503.4Q722.1 526.3 729.5 548Q737 569.7 750.8 588.1Q764.7 606.5 783.5 619.7Q802.4 633 824.5 639.7Q846.6 646.5 869.8 646.1Q892.9 645.7 914.9 638.2Q936.8 630.6 955.4 616.6Q974 602.6 987.4 583.6Q1000.8 564.5 1007.6 542.2Q1014.4 519.8 1014.1 496.4Q1013.7 473 1006 450.8Q998.4 428.7 984.3 409.9Q970.2 391.1 950.9 377.6Q931.6 364 909.1 357.1Q886.5 350.2 862.8 350.6Q839.2 351 816.8 358.7Q794.3 366.4 775.4 380.6Q756.4 394.9 742.7 414.4Q729 433.9 722 456.7Q715 479.5 715.4 503.4Q715.8 527.3 723.6 549.9Q731.4 572.6 745.8 591.7Q760.2 610.9 779.9 624.7Q799.6 638.6 822.6 645.6Q845.6 652.7 869.7 652.3Q893.9 651.9 916.8 644.1Q939.7 636.2 959 621.7Q978.4 607.1 992.4 587.3Q1006.4 567.4 1013.5 544.1Q1020.7 520.8 1020.3 496.5Q1019.9 472.1 1012 448.9Q1004.1 425.8 989.4 406.2Q974.6 386.6 954.6 372.5Q934.5 358.4 911 351.2Q887.5 344 862.9 344.4Q838.2 344.7 814.9 352.7Q791.5 360.7 771.7 375.6Q751.9 390.4 737.7 410.7Q723.4 431 716.1 454.7Q708.8 478.5 709.2 503.3Q709.6 528.2 717.6 551.8Q725.7 575.4 740.7 595.4Q755.7 615.4 776.2 629.8Q796.7 644.2 820.6 651.6Q844.6 658.9 869.7 658.6Q894.9 658.2 918.7 650Q942.5 641.9 962.7 626.8Q982.9 611.6 997.4 591Q1012 570.3 1019.4 546.1Q1026.9 521.9 1026.5 496.5Q1026.1 471.1 1017.9 447.1Q1009.7 423 994.4 402.6Q979.1 382.2 958.3 367.5Q937.4 352.8 913 345.3Q888.5 337.7 862.9 338.1Q837.3 338.5 813 346.8Q788.7 355.1 768.1 370.5Q747.5 385.9 732.7 407Q717.8 428.1 710.2 452.7Q702.6 477.4 703 503.3Q703.3 529.2 711.7 553.7Q720.1 578.2 735.6 599Q751.2 619.8 772.5 634.8Q793.7 649.8 818.6 657.5Q843.6 665.2 869.7 664.8Q895.8 664.4 920.5 656Q945.3 647.5 966.3 631.8Q987.3 616.1 1002.4 594.7Q1017.6 573.2 1025.4 548.1Q1033.1 522.9 1032.8 496.6Q1032.4 470.2 1023.9 445.2Q1015.4 420.2 999.5 399Q983.6 377.8 962 362.5Q940.3 347.2 915 339.4Q889.6 331.5 863 331.9Q836.3 332.3 811.1 340.8Q785.9 349.4 764.5 365.4Q743.1 381.4 727.7 403.3Q712.2 425.2 704.3 450.7Q696.4 476.4 696.7 503.2Q697.1 530.1 705.7 555.5Q714.4 581 730.5 602.6Q746.7 624.2 768.7 639.8Q790.8 655.4 816.7 663.4Q842.5 671.4 869.6 671Q896.7 670.7 922.4 661.9Q948.1 653.2 969.9 636.9Q991.7 620.6 1007.4 598.4Q1023.2 576.1 1031.3 550Q1039.4 524 1039 496.6Q1038.6 469.3 1029.8 443.3Q1021 417.4 1004.6 395.4Q988.2 373.4 965.7 357.5Q943.2 341.6 916.9 333.5Q890.6 325.3 863 325.6Q835.4 326 809.3 334.9Q783.1 343.8 760.9 360.3Q738.7 376.9 722.7 399.6Q706.6 422.2 698.4 448.8Q690.1 475.3 690.5 503.1Q690.8 531 699.8 557.4Q708.8 583.8 725.5 606.2Q742.2 628.6 765 644.8Q787.9 661 814.6 669.3Q841.4 677.6 869.5 677.3Q897.6 676.9 924.3 667.9Q950.9 658.9 973.5 642Q996.1 625.2 1012.4 602.1Q1028.8 579 1037.2 552.1Q1045.6 525 1045.2 496.7Q1044.9 468.3 1035.8 441.5Q1026.7 414.6 1009.7 391.8Q992.7 369 969.4 352.5Q946.2 336 919 327.6Q891.7 319.1 863.1 319.4Q834.5 319.8 807.4 328.9Q780.3 338.1 757.3 355.2Q734.3 372.4 717.7 395.8Q701 419.3 692.5 446.7Q683.9 474.2 684.2 503Q684.6 531.9 693.8 559.2Q703.1 586.6 720.4 609.8Q737.6 633 761.3 649.8Q784.9 666.6 812.6 675.2Q840.4 683.8 869.4 683.5Q898.5 683.2 926.1 673.9Q953.7 664.5 977.1 647.1Q1000.5 629.7 1017.4 605.9Q1034.3 582 1043.1 554.1Q1051.8 526.1 1051.5 496.8Q1051.1 467.5 1041.7 439.6Q1032.3 411.8 1014.8 388.2Q997.2 364.6 973.2 347.5Q949.1 330.5 921 321.7Q892.8 312.8 863.2 313.2Q833.6 313.5 805.6 323Q777.5 332.4 753.7 350.1Q729.9 367.8 712.7 392.1Q695.5 416.3 686.6 444.7Q677.7 473.1 678 502.9Q678.3 532.8 687.9 561.1Q697.4 589.4 715.3 613.4Q733.1 637.4 757.5 654.8Q782 672.1 810.6 681.1Q839.3 690.1 869.3 689.7Q899.4 689.4 927.9 679.8Q956.5 670.2 980.7 652.2Q1004.9 634.2 1022.4 609.6Q1039.9 585 1049 556.1Q1058 527.2 1057.7 496.9" stroke="url(#hs)" stroke-width="4.05" stroke-linecap="round"/>
<path d="M853.4 500.2h26.6M866.7 486.9v26.6" stroke="#ff0000" stroke-width="2.4"/>
</g>
<g font-family="DejaVu Sans, Liberation Sans, sans-serif" fill="#808080" font-size="15" text-anchor="middle">
<text id="ky0" x="612.6" y="319.6">150</text>
<text id="ky1" x="612.6" y="381.5">100</text>
<text id="ky2" x="612.6" y="443.4">50</text>
<text id="ky3" x="612.6" y="505.4">0</text>
<text id="ky4" x="612.6" y="567.3">−50</text>
<text id="ky5" x="612.6" y="629.7">−100</text>
<text id="ky6" x="612.6" y="690.6">−150</text>
<text id="kz0" x="603" y="750.3">−60</text>
<text id="kz1" x="584.1" y="767.7">−40</text>
<text id="kz2" x="562.7" y="788">−20</text>
<text id="kz3" x="537.2" y="810.5">0</text>
<text id="kz4" x="507.4" y="838">20</text>
<text id="kz5" x="472.5" y="869.8">40</text>
<text id="kz6" x="428.6" y="909.2">60</text>
</g>
<g font-family="DejaVu Sans, Liberation Sans, sans-serif" fill="#808080" font-size="18.2" text-anchor="middle">
<text id="kyt" transform="translate(578.8 501.7) rotate(90)" x="0" y="6.500">ky [m⁻¹]</text>
<text id="kzt" transform="translate(492.200 803.400) rotate(-37)" x="0" y="6.500">kz [m⁻¹]</text>
</g>
<g font-family="DejaVu Sans, Liberation Sans, sans-serif" fill="#808080" font-size="15">
<path d="M274 56.2H312.1" stroke="#808080" stroke-width="2.6"/>
<text id="lg1" x="318.3" y="61.9">Trajectory</text>
<circle cx="425.500" cy="56.200" r="1.400" fill="#2a0a9a"/>
<text id="lg2" x="450.2" y="61.9">ADC</text>
<path d="M496.700 56.200H534.500" stroke="#ff0000" stroke-width="2.600"/>
<path d="M508.200 56.200h14.600M515.500 48.800v14.800" stroke="#ff0000" stroke-width="5.200"/>
<text id="lg3" x="540.800" y="61.900">k=0</text>
</g>
</svg>
<div id="titlebar"></div>
<div id="sidebar"></div>
<svg class="ico" style="left:10px;top:9px" width="20" height="20" viewBox="0 0 20 20"><rect width="20" height="20" rx="3.2" fill="#343a40"/><path d="M11.200 2.400L12 0h1.900L13.500 3z" fill="#fff"/><circle cx="10" cy="8" r="6" fill="#2980b9"/><path d="M6.200 12.800l2.900 1.300-2.700 2.900z" fill="#fff"/><path d="M6.200 18.200c1.500 1.500 5.600 1.500 7.500.1c1-.8.200-1.700-1.700-2.100" fill="none" stroke="#9a9a9a" stroke-width="1.300"/></svg>
<div class="t" id="t_title" style="left:35.14px;top:12.97px;font-size:14.8px;color:#000;letter-spacing:-0.16px;">KomaUI</div>
<svg class="ico" style="left:1320px;top:1px" width="160" height="37" viewBox="1320 1 160 37"><path d="M1330 18.5h12M1388.5 13.5h11v11h-11zM1447 13l12 12M1459 13l-12 12" fill="none" stroke="#000" stroke-width="1.1"/></svg>
<svg class="ico" id="logo" style="left:1px;top:38px" width="249" height="110" viewBox="1 38 249 110"><g font-family="Liberation Sans, sans-serif" font-size="68" fill="#fff" stroke="#fff" stroke-width="1.3" stroke-linejoin="round" stroke-linecap="round"><text id="lk" transform="translate(16.600 107) scale(0.98 1.045)">K</text><text id="lm" font-size="64" transform="translate(103.800 106.700) scale(1.150 1.010)">m</text><text id="la" font-size="64" transform="translate(165.500 106.700) scale(0.950 1.010)">a</text></g><path fill-rule="evenodd" fill="#979797" d="M66.5 120.5a15 6.5 0 1 0 30 0a15 6.5 0 1 0-30 0zM74.1 119a7.900 3.600 0 1 0 15.800 0a7.900 3.600 0 1 0-15.800 0z"/><path d="M60 108h24.700v8l-8.700 2.500-10 1.100h-6z" fill="#212529"/><path d="M69.200 106l11.600 4.800-9.700 8.600z" fill="#fff"/><circle cx="82.200" cy="89.800" r="18.550" fill="#2980b9"/><path d="M87.300 64.800l6.900 2.300-2.400 7.700-7.100-2.900z" fill="#fff" stroke="#fff" stroke-width=".6" stroke-linejoin="round"/></svg>
<div class="hr" style="top:147px"></div>
<svg class="ico" style="left:19px;top:181px" width="30" height="22" viewBox="19 181 30 22"><path d="M20.600 192.300H27.200V184.400H33.700V199.500H39.800V192.300H46.600" fill="none" stroke="#e2e2e2" stroke-width="2.600" stroke-linejoin="round"/></svg>
<div class="t" id="t_seq" style="left:56.04px;top:184.99px;font-size:19.5px;color:#d8d9da;letter-spacing:-0.39px;">Sequence</div>
<div class="caret" style="left:152.2px;top:190px;border-top-color:#d4d6d8"></div>
<div class="hr" style="top:427.5px"></div>
<div id="menu"><div class="div"></div></div>
<div class="t" id="t_vs" style="left:42.9px;top:240.6px;font-size:17.6px;color:#e4e6e8;letter-spacing:-0.47px;">View Sequence</div>
<div class="t" id="t_vk" style="left:42.9px;top:278.6px;font-size:17.6px;color:#e4e6e8;letter-spacing:-0.42px;">View <span style="font-family:'Liberation Serif',serif;font-style:italic;font-weight:bold;font-size:20.5px;letter-spacing:0;margin:0 1.6px 0 1px">k</span>-space</div>
<div class="t" id="t_vm" style="left:42.9px;top:324.6px;font-size:17.6px;color:#e4e6e8;letter-spacing:-0.13px;">View Moments »</div>
<svg class="ico" style="left:48px;top:380px" width="22" height="22" viewBox="48 380 22 22"><path d="M58.600 381.900L52.200 389.100h3.900v6.100h5.300v-6.100h3.700z" fill="#fbfbfc" stroke="#fbfbfc" stroke-width=".5" stroke-linejoin="round"/><path d="M50.700 393.800h4.500v1.700a.9.900 0 0 0 .9.900h5.300a.9.900 0 0 0 .9-.9v-1.700h4.100a.8.800 0 0 1 .8.800v4.500a.8.800 0 0 1-.8.800H50.700a.8.800 0 0 1-.8-.8v-4.500a.8.800 0 0 1 .8-.8z" fill="#fbfbfc"/><circle cx="62.400" cy="397.800" r=".6" fill="#343a40"/><circle cx="64.600" cy="397.800" r=".6" fill="#343a40"/></svg>
<div class="t" id="t_file" style="left:75.44px;top:383.6px;font-size:17.6px;color:#e4e6e8;letter-spacing:-0.42px;">.seq (Pulseq)/.seqk (Koma)</div>
<div class="t" id="t_spiral" style="left:298.26px;top:383.6px;font-size:17.6px;color:#6c757d;letter-spacing:-0.4px;">spiral.seq</div>
<div class="btn" style="top:449.2px"><div class="main"></div><div class="split"></div></div>
<div class="t" id="t_sim" style="left:77.16px;top:461.6px;font-size:17.6px;color:#fff;letter-spacing:-0.23px;">Simulate!</div>
<div class="caret" style="left:212.2px;top:465.8px;border-left-width:5px;border-right-width:5px;border-top-width:5px;border-top-color:#2e86c1"></div>
<svg class="ico" style="left:20px;top:501px" width="33" height="23" viewBox="20 501 33 23"><rect x="21.3" y="502.7" width="30" height="19.3" rx="2.6" fill="#a7a7a9" stroke="#d2d2d4" stroke-width="1.2"/><rect x="23.700" y="504.900" width="18.800" height="14.500" rx=".8" fill="none" stroke="#26292d" stroke-width="1.250"/><path d="M26.100 512.400h14.400M27.300 512.400c1.600-8.200 3.900-8.200 5.700 0s4.100 5.800 5.500 0" fill="none" stroke="#26292d" stroke-width="1.100"/><rect x="45.900" y="504.300" width="2.900" height="1.400" fill="#26292d"/><rect x="45.900" y="506.400" width="2.900" height="1.400" fill="#26292d"/><circle cx="47.600" cy="512" r="1.900" fill="#26292d"/><circle cx="47.600" cy="518" r="1.900" fill="#26292d"/></svg>
<div class="t" id="t_raw" style="left:61.36px;top:504.99px;font-size:19.5px;color:#acafb1;letter-spacing:-0.57px;">RawData</div>
<div class="caret" style="left:150px;top:510px"></div>
<div class="t" id="t_empty" style="left:50.42px;top:544.99px;font-size:19.5px;color:#474c51;letter-spacing:0.85px;">empty.mrd</div>
<div class="hr" style="top:587.5px"></div>
<div class="btn" style="top:609.2px"><div class="main"></div><div class="split"></div></div>
<div class="t" id="t_rec" style="left:65.08px;top:621.6px;font-size:17.6px;color:#fff;letter-spacing:-0.29px;">Reconstruct!</div>
<div class="caret" style="left:212.2px;top:625.8px;border-left-width:5px;border-right-width:5px;border-top-width:5px;border-top-color:#2e86c1"></div>
<svg class="ico" style="left:20px;top:662px" width="26" height="21" viewBox="20 662 26 21"><rect x="21" y="667.200" width="19.700" height="13.700" rx="2.200" fill="#a3a3a5"/><rect x="25.400" y="663.100" width="18.600" height="13.800" rx="2.200" fill="#b6b7b9" stroke="#212529" stroke-width="1.300" paint-order="stroke"/><circle cx="29.600" cy="667" r="1.500" fill="#212529"/><path d="M27.400 674.700l4.100-3.900 2.200 1.900 4.300-4.800 4 4.200v2.600z" fill="#212529"/></svg>
<div class="t" id="t_img" style="left:53.5px;top:664.99px;font-size:19.5px;color:#acafb1;letter-spacing:0.11px;">Image</div>
<div class="caret" style="left:118.9px;top:670px"></div>
<div class="hr" style="top:717.7px"></div>
<svg class="ico" style="left:20.600px;top:756px" width="21" height="18" viewBox="0 0 21 18"><path d="M1 11v4.200a1.800 1.800 0 0 0 1.800 1.800h15.400a1.800 1.800 0 0 0 1.800-1.800V11" fill="none" stroke="#c2c4c6" stroke-width="1.400" stroke-linecap="round"/><path d="M10.500 0.800v11M6 7.600l4.500 4.500 4.500-4.500" fill="none" stroke="#c2c4c6" stroke-width="1.400" stroke-linecap="round" stroke-linejoin="round"/></svg>
<div class="t" id="t_exp" style="left:51.34px;top:755.99px;font-size:19.5px;color:#acafb1;letter-spacing:0.2px;">Export to .mat</div>
<div class="caret" style="left:186.300px;top:761px"></div>
<div class="hr" style="top:920.7px"></div>
<svg class="ico" style="left:20.600px;top:948px" width="21" height="20" viewBox="0 0 21 20"><path d="M10.500 1L1 4.800v10.400l9.500 3.800 9.500-3.800V4.800zM1 4.800l9.500 3.800 9.500-3.800M10.500 8.600V19M5.700 2.900l9.600 3.800v3" fill="none" stroke="#bfc1c3" stroke-width="1.150" stroke-linejoin="round"/></svg>
<div class="t" id="t_ver" style="left:51.34px;top:948.99px;font-size:19.5px;color:#acafb1;font-weight:bold;letter-spacing:0.11px;">Koma v0.7.5</div>
<div class="caret" style="left:172.700px;top:954px;border-left-width:5.500px;border-right-width:5.500px"></div>
<div id="frame"></div>
</div>
</body>
</html>
